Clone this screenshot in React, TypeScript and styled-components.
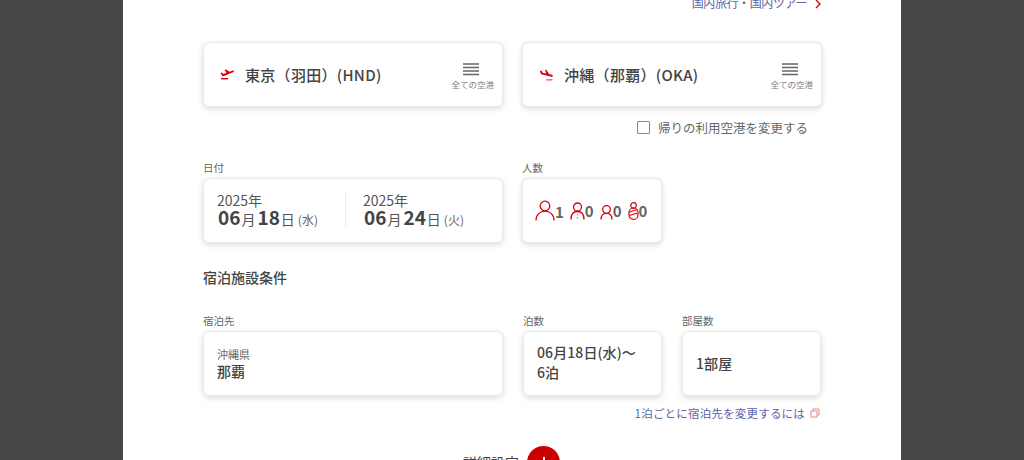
import React from "react";
import styled, { createGlobalStyle } from "styled-components";

const Global = createGlobalStyle`
  html, body { margin: 0; padding: 0; width: 1024px; height: 460px; overflow: hidden; background: #474747; }
  * { box-sizing: border-box; }
`;
const Page = styled.div`
  width: 1024px; height: 460px; overflow: hidden; display: flex; justify-content: center;
  background: #474747;
  font-family: "Noto Sans CJK JP", "Noto Sans", sans-serif; color: #444;
`;
const Panel = styled.main`
  width: 778px; height: 460px; background: #fff; padding: 0 79px 0 80px;
  display: flex; flex-direction: column; overflow: hidden;
  & > * { flex-shrink: 0; }
`;
const TopLink = styled.a`
  height: 49px; margin-top: -7px; display: flex; justify-content: flex-end; gap: 6px;
  font-size: 12px; letter-spacing: -.4px; line-height: 20px; color: #5c64a8;
  svg { margin-top: 6px; margin-left: 1px; }
`;
const Row = styled.div<{ $cols: string; $gap?: number }>`
  display: grid; grid-template-columns: ${p => p.$cols}; column-gap: ${p => p.$gap ?? 19}px;
`;
const Card = styled.div<{ $h: number }>`
  height: ${p => p.$h}px; background: #fff; border-radius: 6px;
  border: 1px solid #e9e9e9;
  box-shadow: 0 2px 6px rgba(0,0,0,.14);
`;
const AirportCard = styled(Card)`
  display: flex; align-items: center; padding: 0 8px 0 16px;
`;
const AirportName = styled.span`
  font-size: 15px; font-weight: 500; letter-spacing: .3px; margin-left: 11px; flex: 1; color: #444;
`;
const AllAirports = styled.div`
  display: flex; flex-direction: column; align-items: center; gap: 2px; margin-top: 3px;
  font-size: 8.5px; line-height: 12px; color: #808080;
  svg { margin-right: 3px; }
`;
const Check = styled.label`
  height: 53px; display: flex; align-items: center; justify-content: flex-end; gap: 8px;
  padding: 0 14px 13px 0; font-size: 12.5px; color: #666;
`;
const Box = styled.span`
  width: 13px; height: 13px; border: 1px solid #888; border-radius: 1px; background: #fff;
`;
const Labelled = styled.div`display: flex; flex-direction: column;`;
const Label = styled.div`
  font-size: 10.5px; line-height: 16px; height: 16px; color: #666; margin-bottom: 2px;
`;
const DateCard = styled(Card)`
  display: grid; grid-template-columns: 128px 1fr; padding: 13px 0 0 13px;
`;
const DateCell = styled.div<{ $divided?: boolean }>`
  height: 36px;
  ${p => p.$divided ? "border-left: 1px solid #eee; padding-left: 17px;" : ""}
`;
const Year = styled.div`font-size: 14px; line-height: 17px; color: #555;`;
const DateLine = styled.div`
  display: flex; align-items: baseline; padding-left: 1px; line-height: 20px; margin-top: -2px; color: #444;
`;
const Big = styled.b`font-size: 19px; font-weight: 700; margin-right: 1px;`;
const Unit = styled.span`font-size: 14px; margin-right: 2px; color: #555;`;
const Dow = styled.span`font-size: 12px; color: #666; margin-left: 1px;`;
const Pax = styled(Card)`display: flex; align-items: center; padding: 0 0 0 12px;`;
const PaxItem = styled.div`
  display: flex; align-items: flex-end; margin-right: 6px; font-size: 15px; font-weight: 700; color: #666; line-height: 18px;
`;
const Heading = styled.h2`
  margin: 24px 0 26px; font-size: 14px; line-height: 20px; font-weight: 500; color: #444;
`;
const StayCard = styled(Card)`padding: 15px 13px 0; line-height: 20px;`;
const Pref = styled.div`font-size: 11px; line-height: 14px; color: #666;`;
const Strong = styled.div`font-size: 14px; font-weight: 500; line-height: 20px; letter-spacing: .1px; color: #444;`;
const Centered = styled(StayCard)`padding-top: 21px;`;
const Nights = styled(StayCard)`padding-top: 10px;`;
const FootLink = styled.a`
  display: flex; justify-content: flex-end; align-items: center; gap: 5px; height: 34px; padding-right: 2px;
  font-size: 11.5px; letter-spacing: .2px; color: #5c64a8;
`;
const More = styled.div`
  display: flex; justify-content: center; align-items: flex-start; gap: 8px; margin-top: 16px; margin-left: -2px;
  font-size: 14px; color: #444; line-height: 32px;
`;
const MoreLabel = styled.span``;
const Plus = styled.span`
  width: 33px; height: 33px; border-radius: 50%; background: #cc0000; position: relative; flex: none;
  &::before { content: ""; position: absolute; left: 10.5px; top: 15.5px; width: 12px; height: 2px; background: #fff; }
  &::after { content: ""; position: absolute; left: 15.5px; top: 10.5px; width: 2px; height: 12px; background: #fff; }
`;

const Dep = () => (
  <svg width="14" height="14" viewBox="0 0 14 14" fill="#d7000f" aria-hidden="true">
    <path d="M0.5 5 L2 4.5 L3.5 6 L6.5 4.8 L4.5 2 L6 1.6 L9.5 3.8 L12 2.8 C13.2 2.3 14 2.4 14 2.9 C14 3.5 13 4.2 11.8 4.7 L4 8 C3 8.4 2.4 8 2 7.4 Z" />
    <rect x="1" y="10" width="7" height="1.4" />
  </svg>
);
const Arr = () => (
  <svg width="14" height="14" viewBox="0 0 14 14" fill="#d7000f" aria-hidden="true">
    <path d="M1 2.5 L2.5 2.8 L4 5 L7.2 5.6 L6 1.5 L7.5 1.9 L10 6 L12.6 6.8 C13.6 7.1 14 7.6 13.8 8.2 C13.6 8.8 12.6 8.8 11.6 8.5 L3 6.6 C2 6.2 1.6 5.6 1.4 4.6 Z" />
    <rect x="7" y="11" width="6.5" height="1.6" fill="#ee7777" />
  </svg>
);
const Menu = () => (
  <svg width="16" height="13" viewBox="0 0 16 13" aria-hidden="true">
    <path d="M0 1h16M0 4.5h16M0 8h16M0 11.5h16" stroke="#666" strokeWidth="1.6" />
  </svg>
);
const Adult = () => (
  <svg width="20" height="21" viewBox="0 0 20 21" fill="none" stroke="#d7000f" strokeWidth="1.3" aria-hidden="true">
    <circle cx="10" cy="6" r="4.8" />
    <path d="M1 20.5 C1 14.5 5 11.2 10 11.2 C15 11.2 19 14.5 19 20.5" />
  </svg>
);
const Child = () => (
  <svg width="15" height="18" viewBox="0 0 15 18" fill="none" stroke="#d7000f" strokeWidth="1.3" aria-hidden="true">
    <circle cx="7.5" cy="5" r="4" />
    <path d="M1 17.5 C1 12.5 3.5 9.5 7.5 9.5 C11.5 9.5 14 12.5 14 17.5" />
    <path d="M7.5 12.5v.8M7.5 15.5v.8" />
  </svg>
);
const Toddler = () => (
  <svg width="13" height="15" viewBox="0 0 13 15" fill="none" stroke="#d7000f" strokeWidth="1.3" aria-hidden="true">
    <circle cx="6.5" cy="4.5" r="3.8" />
    <path d="M1 14.5 C1 10.5 3 8.3 6.5 8.3 C10 8.3 12 10.5 12 14.5" />
  </svg>
);
const Baby = () => (
  <svg width="11" height="18" viewBox="0 0 11 18" fill="none" stroke="#d7000f" strokeWidth="1.2" aria-hidden="true">
    <circle cx="5.5" cy="3.4" r="2.8" />
    <rect x="1" y="6" width="9" height="11.4" rx="4.5" />
    <path d="M1.5 10 L9.5 7.5 M1.5 13.5 L9.5 11" />
  </svg>
);
const Chevron = () => (
  <svg width="8" height="10" viewBox="0 0 8 10" fill="none" stroke="#d7000f" strokeWidth="1.4" aria-hidden="true">
    <path d="M2 1l4 4-4 4" />
  </svg>
);
const Copy = () => (
  <svg width="10" height="10" viewBox="0 0 10 10" fill="none" stroke="#e88" strokeWidth="1" aria-hidden="true">
    <rect x="1" y="3" width="6" height="6" />
    <path d="M3 3V1h6v6H7" />
  </svg>
);

const DateValue = ({ d, w }: { d: string; w: string }) => (
  <>
    <Year>2025年</Year>
    <DateLine>
      <Big>06</Big><Unit>月</Unit><Big>{d}</Big><Unit>日</Unit><Dow>({w})</Dow>
    </DateLine>
  </>
);

export default function App() {
  return (
    <Page>
      <Global />
      <Panel>
        <TopLink>国内旅行・国内ツアー<Chevron /></TopLink>
        <Row $cols="300px 300px">
          <AirportCard $h={65}>
            <Dep /><AirportName>東京（羽田）(HND)</AirportName>
            <AllAirports><Menu />全ての空港</AllAirports>
          </AirportCard>
          <AirportCard $h={65}>
            <Arr /><AirportName>沖縄（那覇）(OKA)</AirportName>
            <AllAirports><Menu />全ての空港</AllAirports>
          </AirportCard>
        </Row>
        <Check><Box />帰りの利用空港を変更する</Check>
        <Row $cols="300px 140px">
          <Labelled>
            <Label>日付</Label>
            <DateCard $h={65}>
              <DateCell><DateValue d="18" w="水" /></DateCell>
              <DateCell $divided><DateValue d="24" w="火" /></DateCell>
            </DateCard>
          </Labelled>
          <Labelled>
            <Label>人数</Label>
            <Pax $h={65}>
              <PaxItem><Adult />1</PaxItem>
              <PaxItem><Child />0</PaxItem>
              <PaxItem><Toddler />0</PaxItem>
              <PaxItem><Baby />0</PaxItem>
            </Pax>
          </Labelled>
        </Row>
        <Heading>宿泊施設条件</Heading>
        <Row $cols="300px 139px 139px" $gap={20}>
          <Labelled>
            <Label>宿泊先</Label>
            <StayCard $h={65}><Pref>沖縄県</Pref><Strong>那覇</Strong></StayCard>
          </Labelled>
          <Labelled>
            <Label>泊数</Label>
            <Nights $h={65}><Strong>06月18日(水)〜<br />6泊</Strong></Nights>
          </Labelled>
          <Labelled>
            <Label>部屋数</Label>
            <Centered $h={65}><Strong>1部屋</Strong></Centered>
          </Labelled>
        </Row>
        <FootLink>1泊ごとに宿泊先を変更するには <Copy /></FootLink>
        <More><MoreLabel>詳細設定</MoreLabel><Plus /></More>
      </Panel>
    </Page>
  );
}
